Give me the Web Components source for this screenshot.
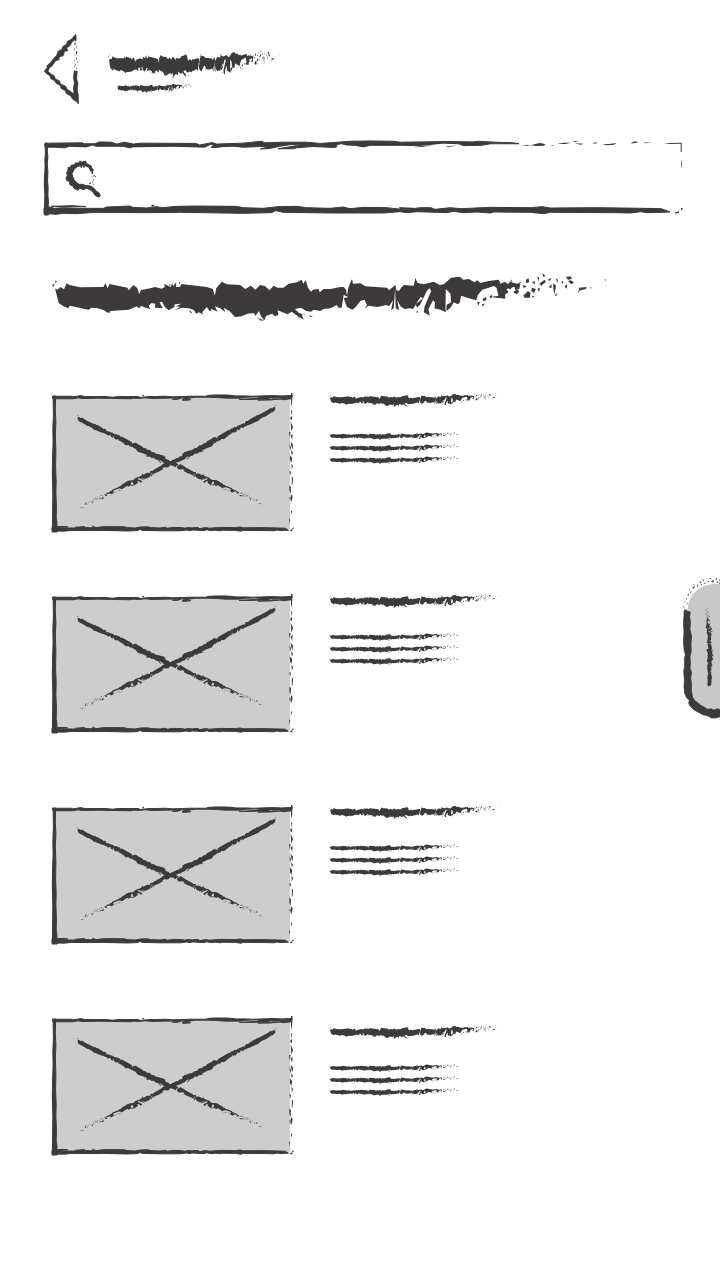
<!DOCTYPE html>
<html lang="en">
<head>
<meta charset="utf-8">
<meta name="viewport" content="width=device-width, initial-scale=1">
<title>Wireframe</title>
<style>
  body { margin: 0; background: #fff; color: #3e393a; font-family: "Liberation Sans", sans-serif; }
</style>
</head>
<body>
<wire-page></wire-page>
<script>
// Ink shapes. Each has its own view box and stretches to the box of its element.
const INK = {
  brush: { box: '36 24 1660 144', d: `M45 70L52 74 62 66 72 73 80 55 88 60 120 67 190 66 196 55 203 70 208 57 262 68 266 76 280 60 292 70 297 88 303 75 330 70 345 66 365 71 374 66 372 57 392 66 396 54 399 64 408 52 408 66 420 66 423 57 500 66 518 72 524 92 528 70 545 50 560 58 600 60 615 72 632 62 645 74 660 60 675 64 688 76 700 62 712 68 730 68 745 56 770 52 784 44 789 56 796 45 803 68 812 80 818 74 835 72 838 82 850 72 870 72 900 66 910 66 917 74 920 92 924 68 928 58 935 42 938 56 960 55 975 64 1040 68 1046 76 1065 60 1068 76 1076 78 1082 68 1090 60 1120 62 1125 38 1131 54 1150 58 1180 50 1198 60 1210 58 1232 38 1258 35 1268 44 1285 42 1302 52 1310 46 1320 54 1345 48 1375 44 1380 56 1393 50 1402 58 1415 42 1412 52 1430 56 1442 50 1432 62 1412 68 1398 72 1404 82 1394 88 1394 101 1350 96 1374 92 1368 68 1360 63 1340 70 1325 74 1312 90 1307 106 1280 98 1262 92 1258 112 1252 118 1240 112 1230 128 1218 138 1218 120 1232 112 1230 86 1216 72 1215 130 1216 142 1200 134 1182 130 1184 112 1178 106 1164 132 1168 152 1150 142 1152 126 1172 78 1168 70 1160 76 1140 118 1130 128 1126 118 1148 100 1140 96 1118 132 1108 130 1092 132 1080 124 1070 104 1076 136 1066 130 1064 70 1060 130 1052 136 1058 106 1046 124 1038 120 1012 126 984 122 972 132 980 120 972 104 960 108 946 126 936 134 920 126 916 116 910 100 924 96 910 90 904 128 894 128 890 120 870 130 850 132 840 138 820 134 812 140 798 138 782 128 764 132 776 144 798 150 784 148 790 164 768 150 754 140 742 148 712 136 714 150 704 154 696 146 678 152 672 166 662 154 656 138 646 152 640 144 622 146 604 154 584 156 568 138 550 128 556 142 540 130 524 124 532 140 514 132 510 140 500 126 486 142 488 148 476 142 468 146 460 134 446 130 426 128 404 136 420 126 408 124 424 116 404 118 402 126 386 136 374 126 366 110 358 112 368 130 344 128 346 116 334 114 326 122 330 132 316 128 304 122 296 130 290 124 266 134 210 138 208 144 200 142 192 136 174 130 154 128 146 134 134 132 90 122 84 130 68 122 56 114Z
    M36 60L44 56 40 66ZM46 46L51 50 46 54ZM386 60L391 56 390 62ZM416 50L421 54 417 58ZM448 134L456 144 450 143ZM650 158L660 162 672 166 662 167ZM768 150L780 162 775 154ZM806 150L818 156 810 156ZM1130 136L1134 144 1128 142ZM1310 110L1318 112 1313 122ZM1326 102L1336 96 1338 106 1328 108ZM1324 118L1334 116 1326 124ZM1346 96L1356 88 1352 100ZM1400 60L1420 62 1408 74ZM1422 64L1440 56 1436 72 1424 74ZM1418 82L1430 72 1436 80 1428 88ZM1446 60L1458 64 1450 70ZM1448 92L1462 78 1470 84 1468 98 1452 98ZM1456 44L1464 40 1466 52 1456 54ZM1474 52L1482 48 1484 58ZM1474 68L1486 72 1480 84 1472 78ZM1474 92L1482 94 1476 98ZM1490 34L1496 38 1493 50ZM1496 56L1512 44 1516 50 1502 62ZM1505 24L1515 34 1508 36ZM1490 72L1498 68 1496 80ZM1522 44L1532 38 1528 48ZM1524 66L1534 58 1532 70ZM1538 54L1546 62 1542 88 1538 72ZM1546 40L1552 44 1550 54ZM1542 90L1550 84 1546 94ZM1576 36L1590 34 1594 42 1582 44ZM1582 48L1590 46 1600 52 1592 58ZM1572 64L1580 58 1578 72ZM1562 50L1568 48 1566 58ZM1614 68L1638 66 1636 72 1620 76 1610 84 1616 74ZM1648 68L1652 66 1652 71ZM1692 42L1695 43 1694 51Z` },
  top: { weight: 1, box: '44 30 1910 32', d: `M46 44L60 40 160 39 162 42 196 42 210 36 245 37 262 43 285 37 312 43 330 40 500 41 510 46 548 38 560 43 640 40 695 34 705 39 760 37 830 37 870 41 912 38 960 34 1020 33 1090 34 1110 37 1250 35 1330 36 1345 34 1395 37 1450 39 1466 42 1420 42 1380 42 1355 47 1300 48 1285 42 1240 40 1160 48 1110 47 1020 47 1000 52 975 47 950 46 935 42 916 45 922 50 916 54 850 51 800 55 790 58 745 58 800 48 820 43 780 45 750 50 720 57 692 59 716 52 690 51 640 53 615 50 580 51 560 54 545 54 553 43 540 45 525 53 500 52 430 50 310 52 300 55 280 50 200 50 190 46 170 52 120 50 106 55 75 53 48 53Z` },
  // The broken, thin end of the long top line, and its corner.
  fade: { box: '44 30 1910 224', d: `M1150 52L1175 47 1210 46 1180 50ZM1245 50L1280 46 1255 52ZM1500 46L1528 39 1544 42 1542 47 1520 48ZM1472 47L1490 44 1500 47ZM1560 47L1572 45 1566 48ZM1580 42L1600 38 1622 38 1605 42ZM1625 34L1645 32 1635 36ZM1632 40L1660 41 1650 44ZM1684 39L1702 37 1695 41ZM1715 43L1735 42 1758 39 1750 44 1728 46ZM1800 40L1812 34 1824 36 1810 40ZM1838 38L1865 35 1846 40ZM1899 42L1918 39 1953 38 1953 66 1950 66 1950 41 1918 42ZM1951 92L1953 92 1953 112 1951 112Z` },
  lid: { weight: 1, box: '42 38 718 22', d: `M43 46L60 45 100 45 104 47 116 45 128 43 140 46 200 46 222 48 240 46 300 46 304 49 330 46 350 46 380 45 400 47 430 46 450 45 500 45 510 42 530 41 560 41 575 42 590 44 620 44 640 45 700 43 725 44 750 43 757 42 757 48 740 50 700 49 660 49 650 47 620 48 600 51 560 51 530 49 510 48 470 48 450 51 430 55 450 49 430 50 380 51 340 52 320 50 300 52 285 51 275 53 220 52 180 51 150 52 130 52 120 50 105 53 60 53 44 52ZM400 54L425 52 412 55ZM430 57L448 54 455 56 440 58ZM600 55L650 52 690 52 640 55ZM655 57L690 55 700 53 720 54 690 57ZM720 53L750 51 755 53 730 56ZM312 43L316 42 314 44Z` },
  base: { weight: 1, box: '44 226 1910 30', d: `M44 234L60 232 75 236 100 234 150 236 222 236 232 232 300 229 310 233 350 235 380 231 400 234 440 230 500 229 620 230 640 234 700 236 745 231 800 230 830 234 900 236 940 232 960 237 1000 233 1070 234 1125 240 1170 234 1202 234 1215 239 1260 234 1292 237 1380 233 1500 234 1535 231 1560 235 1700 234 1840 236 1892 237 1918 247 1850 249 1830 246 1800 250 1750 249 1560 248 1540 252 1500 248 1390 247 1380 250 1340 247 1300 249 1270 245 1250 249 1160 246 1130 249 1110 246 1060 250 980 250 900 250 760 248 738 243 725 249 640 251 450 248 350 249 200 248 140 252 100 251 80 254 44 251ZM66 230L130 228 170 231 110 231ZM366 228L374 226 370 230ZM1108 234L1150 236 1110 237ZM1934 249L1945 247 1938 250ZM1953 236L1954 235 1954 240 1952 241Z` },
  side: { weight: 1, box: '0 0 18 210', d: `M4 0L13 0 12 22 14 40 12 60 14 84 13 110 15 132 14 150 16 172 15 188 18 196 16 210 1 210 2 184 3 150 1 120 2 96 4 70 3 52 5 30Z` },
  speck: { box: '0 0 10 410', d: `M5 0L9 1 8 22 7 42 5 30ZM5 50L8 52 7 68ZM3 72L8 68 7 80 4 78ZM4 84L10 100 6 114ZM0 114L4 116 2 132ZM4 126L9 120 8 138ZM4 144L10 152 9 166 6 158ZM1 150L5 160 3 170ZM5 168L10 176 7 184ZM2 184L8 192 6 206 3 200ZM6 208L10 216 7 226ZM1 230L5 232 3 244ZM7 246L10 250 9 268 7 272ZM1 272L5 278 4 298 1 288ZM5 298L9 304 7 322 4 310ZM1 306L4 310 3 322ZM5 346L8 348 6 360ZM0 370L3 372 2 386ZM5 402L9 404 7 409Z` }
};

const define = (name, markup, setup) => {
  const template = document.createElement('template');
  template.innerHTML = markup;
  customElements.define(name, class extends HTMLElement {
    constructor() {
      super();
      this.attachShadow({ mode: 'open' }).append(template.content.cloneNode(true));
    }
    connectedCallback() { if (setup) setup(this, this.shadowRoot); }
  });
};

define('ink-stroke', `
<style>
  :host { display: block; }
  svg { display: block; width: 100%; height: 100%; fill: #3e393a; stroke: #3e393a; overflow: visible; }
</style>
<svg preserveAspectRatio="none" aria-hidden="true"><path vector-effect="non-scaling-stroke"/></svg>`, (host, root) => {
  const ink = INK[host.getAttribute('kind') || 'brush'];
  root.querySelector('svg').setAttribute('viewBox', ink.box);
  const path = root.querySelector('path');
  path.setAttribute('d', ink.d);
  path.setAttribute('stroke-width', ink.weight || 0);
});

define('sketch-frame', `
<style>
  :host { display: grid; grid-template-rows: minmax(0, 1fr); }
  ink-stroke, .body { grid-area: 1 / 1; min-width: 0; min-height: 0; }
  .body { margin: 4px 3px 3px 4px; background: var(--fill, transparent); display: grid; grid-template-rows: minmax(0, 1fr); }
  .top { align-self: start; height: 10px; display: var(--long, block); }
  .fade { display: var(--long, block); }
  .lid { align-self: start; height: 7px; margin-top: 1px; display: var(--card, none); }
  .base { align-self: end; height: var(--base, 10px); }
  .side { justify-self: start; width: 5px; margin-top: 3px; }
  .edge { justify-self: end; width: 4px; display: var(--card, none); }
</style>
<div class="body"><slot></slot></div>
<ink-stroke class="top" kind="top"></ink-stroke>
<ink-stroke class="fade" kind="fade"></ink-stroke>
<ink-stroke class="lid" kind="lid"></ink-stroke>
<ink-stroke class="base" kind="base"></ink-stroke>
<ink-stroke class="side" kind="side"></ink-stroke>
<ink-stroke class="edge" kind="speck"></ink-stroke>`);

define('page-header', `
<style>
  :host { display: flex; gap: 29px; align-items: flex-start; }
  button { border: 0; padding: 0; background: none; width: 35px; height: 70px; cursor: pointer; }
  svg { display: block; fill: #3e393a; stroke: #3e393a; stroke-width: 2; }
  .titles { flex: 1; padding-top: 16px; }
  .title { max-width: 172px; height: 28px; }
  .sub { max-width: 77px; height: 10px; margin: 5px 0 0 9px; }
</style>
<button type="button" aria-label="Back">
  <svg width="35" height="70" viewBox="42 42 105 210" aria-hidden="true"><path d="M43 153L52 142 50 138 63 126 70 116 80 106 84 94 96 88 98 80 110 72 112 64 124 58 137 43 139 54 137 64 134 60 126 66 121 76 110 84 114 92 104 94 100 106 90 110 84 120 76 124 66 138 58 144 54 154 66 164 72 166 76 176 88 182 92 192 106 198 112 208 124 216 132 222 130 204 133 190 130 172 133 152 142 154 140 176 144 190 142 210 145 226 146 252 138 244 128 238 122 228 108 220 106 212 94 206 90 196 78 190 74 182 62 176 60 168 48 160Z"/><path stroke="none" d="M84 114L90 120 86 122ZM95 104L102 104 96 112ZM133 70L136 66 137 74 134 76ZM138 76L140 80 138 86ZM132 82L135 90 133 92ZM139 92L142 96 140 104 137 98ZM134 104L136 102 135 110ZM138 112L141 114 139 122ZM133 118L135 122 134 126ZM142 124L144 126 141 130ZM137 130L139 136 136 138ZM132 136L134 140 132 143ZM139 142L142 144 138 148Z"/></svg>
</button>
<div class="titles"><ink-stroke class="title"></ink-stroke><ink-stroke class="sub"></ink-stroke></div>`);

define('search-field', `
<style>
  :host { display: block; }
  sketch-frame { height: 75px; }
  label { display: flex; align-items: center; gap: 12px; padding: 2px 12px 0 17px; min-height: 0; }
  svg { flex: none; fill: #3e393a; stroke: #3e393a; stroke-width: 3; }
  input { flex: 1; min-width: 0; height: 44px; border: 0; outline: 0; padding: 0; background: none; font: 20px "Liberation Sans", sans-serif; color: #3e393a; }
</style>
<sketch-frame><label>
  <svg width="36" height="38" viewBox="103 97 108 114" aria-hidden="true"><path d="M106 152L110 144 108 134 112 130 112 120 120 118 122 112 132 112 134 106 144 106 148 100 154 104 164 100 168 108 176 112 182 116 184 124 188 126 186 132 180 130 174 118 166 116 162 110 160 120 156 110 152 120 148 112 144 118 140 114 138 120 132 122 128 130 124 138 126 146 130 156 137 164 145 170 156 170 166 174 174 174 182 176 192 184 198 192 204 194 209 204 204 208 194 204 186 192 178 186 168 182 158 186 148 182 142 188 130 182 126 174 118 172 116 162 108 158Z"/><path stroke="none" d="M176 122L181 122 180 128ZM182 134L186 130 188 138 184 140ZM190 140L192 144 190 148 188 144ZM183 144L186 148 183 150ZM194 144L197 147 193 150ZM188 154L191 156 187 160ZM184 162L188 160 186 166ZM176 166L181 164 180 169 176 170ZM188 168L191 170 187 172Z"/></svg>
  <input type="search" aria-label="Search">
</label></sketch-frame>`);

define('media-card', `
<style>
  :host { display: grid; grid-template-columns: 241px 1fr; column-gap: 36px; }
  :host([lowered]) .lines { padding-top: 9px; }
  sketch-frame { height: 139px; --fill: #cdcdcd; --base: 6px; --card: block; --long: none; }
  svg { display: block; width: 100%; height: 100%; min-height: 0; fill: #3e393a; }
  .title { max-width: 172px; height: 14px; margin-bottom: 25px; }
  .line { max-width: 134px; height: 8px; margin-bottom: 4px; }
</style>
<sketch-frame><svg viewBox="56 397 234 132" preserveAspectRatio="none" aria-hidden="true">
  <path class="stroke" transform="translate(77 418) rotate(25.5) scale(.128 .068) translate(-45 -95)"/>
  <path class="stroke" transform="translate(276 408) rotate(152.4) scale(.138 -.068) translate(-45 -95)"/>
</svg></sketch-frame>
<div class="lines">
  <ink-stroke class="title"></ink-stroke>
  <ink-stroke class="line"></ink-stroke>
  <ink-stroke class="line"></ink-stroke>
  <ink-stroke class="line"></ink-stroke>
</div>`, (host, root) => {
  root.querySelectorAll('.stroke').forEach(path => path.setAttribute('d', INK.brush.d));
});

define('edge-handle', `
<style>
  :host { display: block; width: 37px; height: 144px; }
  button { display: block; border: 0; padding: 0; background: none; cursor: pointer; }
  svg { display: block; fill: #3e393a; }
</style>
<button type="button" aria-label="Open panel">
  <svg width="37" height="144" viewBox="39 20 111 432" aria-hidden="true">
    <path fill="#c8c8c8" d="M150 44H128Q88 48 68 76Q52 98 52 132V370Q56 420 110 428H150Z"/>
    <path stroke="#3e393a" stroke-width="2" d="M42 124L50 122 52 126 61 128 59 142 62 160 60 180 65 200 63 224 64 244 60 264 62 282 60 296 65 310 62 326 65 346 64 362 68 384 76 396 84 400 92 408 104 414 112 420 124 418 132 422 142 418 150 421 150 442 138 446 124 446 114 440 98 436 88 430 76 424 68 418 60 410 56 402 58 392 50 386 44 372 42 352 43 330 41 306 44 288 43 268 46 256 42 240 40 214 42 188 40 160 42 138Z"/>
    <path d="M40 112L42 108 43 116ZM44 118L48 120 44 122ZM50 102L52 98 53 106ZM43 98L46 96 45 101ZM48 86L52 88 49 91ZM52 76L57 72 55 80ZM60 68L65 66 62 72ZM56 62L59 58 60 63ZM66 56L74 50 72 58ZM70 44L75 46 71 48ZM80 50L85 44 84 52ZM88 38L95 36 92 42ZM92 46L97 44 94 49ZM98 30L103 33 99 36ZM102 44L107 38 106 44ZM112 36L118 34 115 39ZM118 26L124 26 122 30ZM124 36L130 32 132 36 126 40ZM136 28L142 27 139 33ZM138 39L144 36 146 41ZM146 30L150 32 147 35ZM147 42L150 38 150 44Z"/>
    <path class="stroke" transform="translate(118 351) rotate(-90) scale(.148 .18) translate(-45 -95)"/>
  </svg>
</button>`, (host, root) => {
  root.querySelector('.stroke').setAttribute('d', INK.brush.d);
});

define('wire-page', `
<style>
  :host { display: block; position: relative; box-sizing: border-box; min-height: 100vh; padding: 34px 38px 40px 44px; overflow: hidden; }
  search-field { margin-top: 36px; }
  .heading { max-width: 554px; height: 48px; margin: 58px 0 0 8px; }
  main { display: flex; flex-direction: column; gap: 72px; margin: 72px 0 0 8px; }
  .lead { display: flex; flex-direction: column; gap: 62px; }
  edge-handle { position: absolute; right: 0; top: 576px; }
</style>
<page-header></page-header>
<search-field></search-field>
<ink-stroke class="heading"></ink-stroke>
<main>
  <div class="lead"><media-card></media-card><media-card></media-card></div>
  <media-card></media-card>
  <media-card lowered></media-card>
</main>
<edge-handle></edge-handle>`);
</script>
</body>
</html>
